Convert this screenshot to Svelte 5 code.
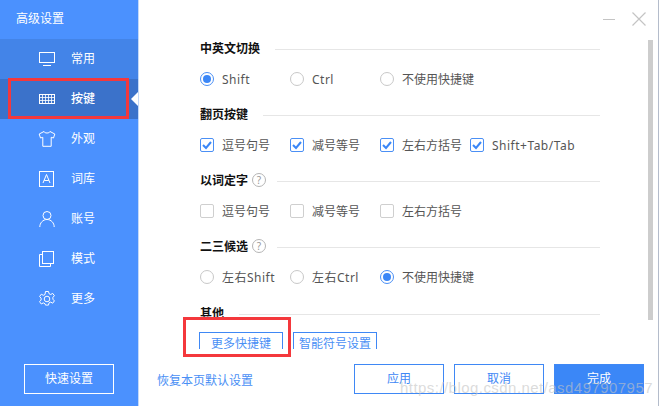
<script lang="ts">
    const navItems = [
        { id: "common", label: "常用" },
        { id: "keys", label: "按键" },
        { id: "look", label: "外观" },
        { id: "dict", label: "词库" },
        { id: "account", label: "账号" },
        { id: "mode", label: "模式" },
        { id: "more", label: "更多" },
    ];

    const sections = [
        { title: "中英文切换", type: "radio", options: [["Shift", true], ["Ctrl", false], ["不使用快捷键", false]] },
        { title: "翻页按键", type: "check", options: [["逗号句号", true], ["减号等号", true], ["左右方括号", true], ["Shift+Tab/Tab", true]] },
        { title: "以词定字", type: "check", help: true, options: [["逗号句号", false], ["减号等号", false], ["左右方括号", false]] },
        { title: "二三候选", type: "radio", help: true, options: [["左右Shift", false], ["左右Ctrl", false], ["不使用快捷键", true]] },
    ];
</script>

<div class="window">
    <aside class="sidebar">
        <div class="app-title">高级设置</div>
        <nav>
            {#each navItems as item, i}
                <div class="nav-item" class:hover={i === 0} class:active={i === 1}>
                    <svg class="nav-icon" width="18" height="18" viewBox="0 0 18 18" fill="none" stroke="#fff" stroke-width="1">
                        {#if item.id === "common"}
                            <rect x="1.5" y="2.5" width="15" height="10" />
                            <path d="M5 15.5h8" />
                        {:else if item.id === "keys"}
                            <rect x="1.5" y="4.5" width="15" height="9" />
                            <path d="M1.5 7.5h15M1.5 10.5h15M4.5 4.5v9M7.5 4.5v9M10.5 4.5v9M13.5 4.5v9" stroke-opacity="0.8" />
                        {:else if item.id === "look"}
                            <path d="M6 1.500 1.200 4 2.500 8l2.300-.7v9h8.400V7.300l2.300.7L16.800 4 12 1.500c-.6 2-5.400 2-6 0z" />
                        {:else if item.id === "dict"}
                            <rect x="1.500" y="1.500" width="14" height="15" />
                            <path d="m5 13 3.500-8.500L12 13M6.200 10.500h4.600" />
                        {:else if item.id === "account"}
                            <circle cx="9" cy="5.500" r="4" />
                            <path d="M1.800 17c0-4 3-7.500 7.200-7.500s7.200 3.500 7.200 7.500" />
                        {:else if item.id === "mode"}
                            <rect x="4.500" y="1.500" width="11" height="12" />
                            <path d="M4.500 4.500h-3v12h11v-3" />
                        {:else}
                            <path d="M7.500 1.500h3l.5 2.200 1.700.8 2-1.100 1.700 2.300-1.500 1.700v1.800l1.500 1.700-1.700 2.300-2-1.100-1.700.8-.5 2.200h-3L7 13.700l-1.700-.8-2 1.100-1.700-2.300 1.500-1.700V8.200L1.600 6.500l1.700-2.300 2 1.100L7 4.500z" />
                            <circle cx="9" cy="9" r="2.800" />
                        {/if}
                    </svg>
                    <span>{item.label}</span>
                    {#if i === 1}<i class="pointer"></i>{/if}
                </div>
            {/each}
        </nav>
        <button class="quick">快速设置</button>
    </aside>

    <main class="main">
        <header class="controls">
            <span class="minimize"></span>
            <svg width="14" height="14" viewBox="0 0 14 14" stroke="#c4c4c4" stroke-width="1.200" fill="none">
                <path d="m.5.500 13 13M13.500.500l-13 13" />
            </svg>
        </header>
        <div class="body">
            <div class="scroller">
                {#each sections as section}
                    <section>
                        <div class="heading">
                            <h3>{section.title}</h3>
                            {#if section.help}<span class="help">?</span>{/if}
                            <hr />
                        </div>
                        <div class="options">
                            {#each section.options as [label, on]}
                                <div class="option">
                                    {#if section.type === "radio"}
                                        <span class="radio" class:on></span>
                                    {:else}
                                        <span class="check" class:on>
                                            {#if on}
                                                <svg width="10" height="9" viewBox="0 0 10 9" fill="none" stroke="#3b87f7" stroke-width="2">
                                                    <path d="m1 4 3 3 5-6" />
                                                </svg>
                                            {/if}
                                        </span>
                                    {/if}
                                    <span class="label" class:latin={/[a-z]/i.test(label)}>{label}</span>
                                </div>
                            {/each}
                        </div>
                    </section>
                {/each}
                <section class="other">
                    <div class="heading">
                        <h3>其他</h3>
                        <hr />
                    </div>
                    <div class="links">
                        <button class="link-btn">更多快捷键</button>
                        <button class="link-btn">智能符号设置</button>
                    </div>
                </section>
            </div>
            <div class="track"><div class="thumb"></div></div>
        </div>
        <footer class="footer">
            <span class="restore">恢复本页默认设置</span>
            <div class="actions">
                <button class="btn">应用</button>
                <button class="btn">取消</button>
                <button class="btn primary">完成</button>
            </div>
        </footer>
    </main>

    <div class="mark mark-nav"></div>
    <div class="mark mark-more"></div>
    <div class="watermark">https://blog.csdn.net/asd497907957</div>
</div>

<style>
    :global(body) {
        background: #fff;
        overflow: hidden;
    }

    .window {
        position: relative;
        display: flex;
        width: 659px;
        height: 406px;
        overflow: hidden;
        border-right: 1px solid #b4bccb;
        box-sizing: border-box;
        background: #fff;
        color: #555;
        font: 12px/16px "Noto Sans", "Noto Sans CJK SC", sans-serif;
    }

    .sidebar {
        display: flex;
        flex-direction: column;
        flex: none;
        width: 139px;
        box-sizing: border-box;
        border-right: 1px solid #c4d9f8;
        background: #4b91fe;
        color: #fff;
    }

    .app-title {
        height: 39px;
        padding-left: 16px;
        line-height: 37px;
    }

    .nav-item {
        position: relative;
        display: flex;
        align-items: center;
        height: 40px;
        padding-left: 38px;
    }

    .nav-item.hover {
        background: #4384e8;
    }

    .nav-item.active {
        background: #3b72ca;
        font-weight: 500;
    }

    .nav-icon {
        margin-right: 15px;
    }

    .pointer {
        position: absolute;
        top: 13px;
        right: 0;
        border: 7px solid transparent;
        border-left-width: 0;
        border-right-color: #fff;
    }

    .quick {
        width: 90px;
        height: 30px;
        margin: auto 0 12px 24px;
        padding: 0;
        border: 1px solid #fff;
        background: none;
        color: #fff;
        font: inherit;
    }

    .main {
        display: flex;
        flex: 1;
        flex-direction: column;
        min-width: 0;
    }

    .controls {
        display: flex;
        align-items: center;
        justify-content: flex-end;
        gap: 17px;
        height: 38px;
        padding-right: 12px;
    }

    .minimize {
        width: 12px;
        height: 1px;
        background: #c4c4c4;
    }

    .body {
        display: flex;
        height: 311px;
        overflow: hidden;
    }

    .scroller {
        flex: 1;
        min-width: 0;
        padding-left: 61px;
        padding-right: 48px;
    }

    .track {
        flex: none;
        width: 5px;
        margin-right: 5px;
        padding-top: 2px;
    }

    .thumb {
        height: 280px;
        background: #cdcdcd;
    }

    section {
        height: 66px;
    }

    .heading {
        display: flex;
        align-items: center;
        height: 20px;
    }

    .heading h3 {
        margin: 0;
        padding-top: 1px;
        color: #111;
        font-size: 12px;
        font-weight: 700;
    }

    .heading hr {
        flex: 1;
        margin: 3px 0 0 15px;
        border: 0;
        border-top: 1px solid #e6e6e6;
    }

    .help {
        width: 12px;
        height: 12px;
        margin-left: 4px;
        margin-right: -4px;
        border: 1px solid #b5b5b5;
        border-radius: 50%;
        color: #999;
        font-size: 10px;
        line-height: 12px;
        text-align: center;
    }

    .options {
        display: flex;
        margin-top: 11px;
    }

    .option {
        display: flex;
        align-items: center;
        flex: none;
        width: 90px;
        height: 20px;
        white-space: nowrap;
    }

    .label {
        padding-top: 1px;
    }

    .label.latin {
        letter-spacing: 0.5px;
    }

    .radio,
    .check {
        display: flex;
        align-items: center;
        justify-content: center;
        flex: none;
        width: 14px;
        height: 14px;
        box-sizing: border-box;
        margin-right: 8px;
        background: #fff;
    }

    .radio {
        border: 1px solid #c8c8c8;
        border-radius: 50%;
    }

    .radio.on {
        border-color: #4a8ff5;
    }

    .radio.on::after {
        content: "";
        width: 8px;
        height: 8px;
        border-radius: 50%;
        background: #3b87f7;
    }

    .check {
        border: 1px solid #cfcfcf;
        border-radius: 2px;
    }

    .check.on {
        border-color: #4a8ff5;
    }

    .other {
        height: auto;
    }

    .other .heading {
        padding-top: 1px;
    }

    .links {
        display: flex;
        gap: 10px;
        margin-top: 9px;
        margin-left: -1px;
    }

    .link-btn {
        width: 84px;
        height: 30px;
        padding: 0 0 6px;
        border: 1px solid #3f88f5;
        background: #fff;
        color: #4a8ff5;
        font: inherit;
    }

    .footer {
        display: flex;
        align-items: flex-start;
        flex: 1;
        padding: 15px 14px 0 18px;
    }

    .restore {
        margin-top: 9px;
        color: #4a8ff5;
    }

    .actions {
        display: flex;
        gap: 10px;
        margin-left: auto;
    }

    .btn {
        width: 90px;
        height: 30px;
        padding: 0;
        border: 1px solid #3f88f5;
        background: #fff;
        color: #3f88f5;
        font: inherit;
    }

    .btn.primary {
        background: #3b87f7;
        color: #fff;
    }

    .mark {
        position: absolute;
        box-sizing: border-box;
        border: 3px solid #f4383c;
        pointer-events: none;
    }

    .mark-nav {
        left: 8px;
        top: 78px;
        width: 121px;
        height: 41px;
    }

    .mark-more {
        left: 183px;
        top: 317px;
        width: 108px;
        height: 40px;
    }

    .watermark {
        position: absolute;
        left: 400px;
        top: 378px;
        color: rgba(195, 195, 195, 0.6);
        font: 15px/20px "Liberation Sans", sans-serif;
        letter-spacing: 0.45px;
        white-space: nowrap;
    }
</style>
